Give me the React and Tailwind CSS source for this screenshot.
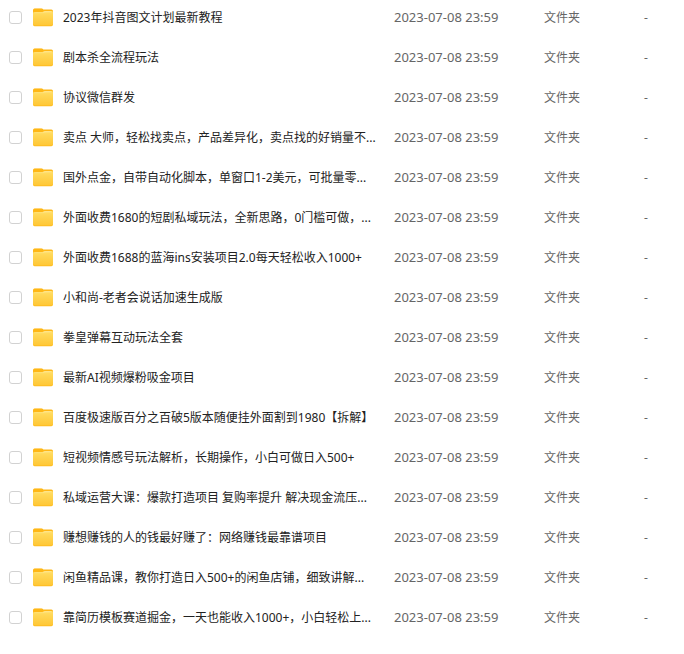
import React from 'react';

const files = [
    '2023年抖音图文计划最新教程',
    '剧本杀全流程玩法',
    '协议微信群发',
    '卖点 大师，轻松找卖点，产品差异化，卖点找的好销量不...',
    '国外点金，自带自动化脚本，单窗口1-2美元，可批量零...',
    '外面收费1680的短剧私域玩法，全新思路，0门槛可做，...',
    '外面收费1688的蓝海ins安装项目2.0每天轻松收入1000+',
    '小和尚-老者会说话加速生成版',
    '拳皇弹幕互动玩法全套',
    '最新AI视频爆粉吸金项目',
    '百度极速版百分之百破5版本随便挂外面割到1980【拆解】',
    '短视频情感号玩法解析，长期操作，小白可做日入500+',
    '私域运营大课：爆款打造项目 复购率提升 解决现金流压...',
    '赚想赚钱的人的钱最好赚了：网络赚钱最靠谱项目',
    '闲鱼精品课，教你打造日入500+的闲鱼店铺，细致讲解...',
    '靠简历模板赛道掘金，一天也能收入1000+，小白轻松上...',
].map((name) => ({ name, modified: '2023-07-08 23:59', type: '文件夹', size: '-' }));

const FolderIcon = () => (
    <svg width="20" height="20" viewBox="0 0 20 20" className="shrink-0" aria-hidden="true">
        <defs>
            <linearGradient id="folder-front" x1="0" y1="0" x2="0" y2="1">
                <stop offset="0" stopColor="#ffde6c" />
                <stop offset="0.25" stopColor="#ffd858" />
                <stop offset="1" stopColor="#ffc736" />
            </linearGradient>
            <linearGradient id="folder-shine" x1="0" y1="0" x2="0" y2="1">
                <stop offset="0" stopColor="#ffeca6" />
                <stop offset="1" stopColor="#ffdc63" />
            </linearGradient>
        </defs>
        {/* Back flap with the tab */}
        <path d="M0 2Q0 0.4 1.6 0.4H8.4Q9.2 0.4 9.8 1L10.4 1.4H18.4Q20 1.4 20 3V8H0Z" fill="#ffb716" />
        <path d="M1 0.9Q1.2 0.2 2 0.2H8.4Q9.2 0.2 9.8 1Z" fill="#ffd470" />
        {/* Front panel */}
        <path d="M0 5H20V16.6Q20 18.2 18.4 18.2H1.6Q0 18.2 0 16.6Z" fill="#ffbc20" />
        <path d="M0 5.4Q0 4 1.4 4H8.8Q9.6 4 10.2 3.5Q10.8 3 11.6 3H18.6Q20 3 20 4.4V16Q20 17.3 18.4 17.3H1.6Q0 17.3 0 16Z" fill="url(#folder-front)" />
        <path d="M1.4 5.4Q2 4.5 3 4.5H9.2Q10 4.5 10.6 4Q11.2 3.5 12 3.5H17.6Q18.4 3.5 18.8 4.2L12 4.4Q11.4 4.5 10.9 5Q10.4 5.4 9.6 5.4Z" fill="url(#folder-shine)" />
    </svg>
);

const FileRow = ({ id, file }) => (
    <tr className="h-10">
        <td className="p-0">
            <div className="flex items-center pl-[9px]">
                <input
                    id={id}
                    type="checkbox"
                    className="mb-px size-[13px] shrink-0 appearance-none rounded-[3px] border border-[#d2d2d2] bg-white checked:bg-blue-500"
                />
                <label htmlFor={id} className="flex items-center pl-[11px] whitespace-nowrap text-[#222]">
                    <FolderIcon />
                    <span className="pl-[10px]">{file.name}</span>
                </label>
            </div>
        </td>
        <td className="p-0 text-[13px]">{file.modified}</td>
        <td className="p-0">{file.type}</td>
        <td className="p-0">{file.size}</td>
    </tr>
);

const App = () => {
    return (
        <main className="-mt-0.5 bg-white font-['Noto_Sans','Noto_Sans_CJK_SC',sans-serif] text-xs text-[#666]">
            <table className="w-full table-fixed border-collapse">
                <colgroup>
                    <col />
                    <col className="w-[150px]" />
                    <col className="w-[100px]" />
                    <col className="w-10" />
                </colgroup>
                <tbody>
                    {files.map((file, index) => (
                        <FileRow key={file.name} id={`file-${index}`} file={file} />
                    ))}
                </tbody>
            </table>
        </main>
    );
};

export default App;
